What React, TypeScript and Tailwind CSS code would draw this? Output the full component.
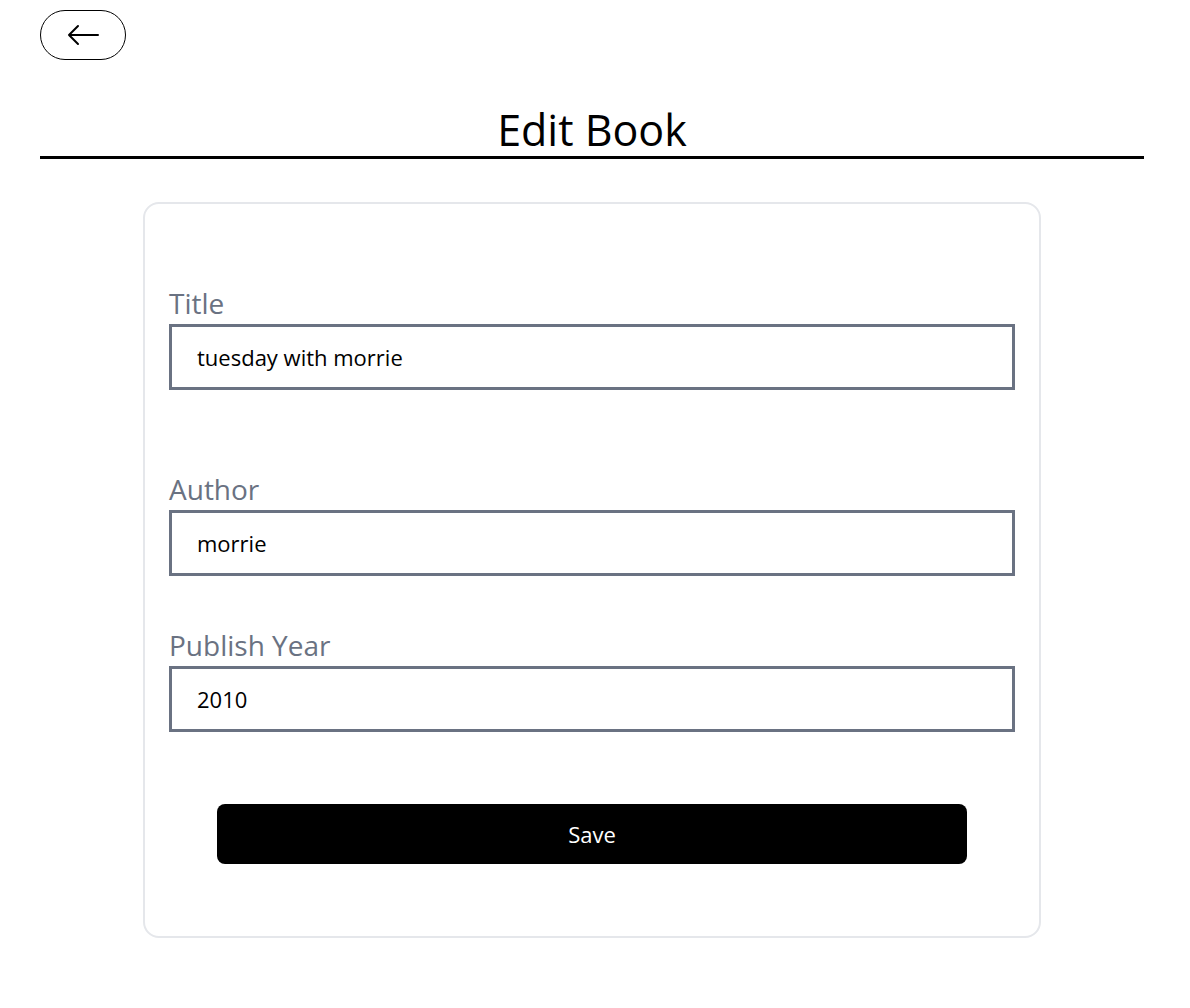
import React from "react";

const fields = [
  { label: "Title", value: "tuesday with morrie", gap: "mt-[84px]" },
  { label: "Author", value: "morrie", gap: "mt-[84px]" },
  { label: "Publish Year", value: "2010", gap: "mt-[54px]" },
];

export default function App() {
  return (
    <div
      className="min-h-screen bg-white pl-10 pr-[46px] pt-[10px] text-black"
      style={{ fontFamily: '"Open Sans", "Noto Sans", sans-serif' }}
    >
      {/* Back button */}
      <button className="flex h-[50px] w-[86px] items-center justify-center rounded-full border border-black">
        <svg width="34" height="24" viewBox="0 0 34 24" fill="none" stroke="black" strokeWidth="2" strokeLinecap="round" strokeLinejoin="round">
          <path d="M32 12H3M12 3L3 12l9 9" />
        </svg>
      </button>

      <h1 className="mt-[43px] border-b-[3px] border-black text-center text-[43px] leading-[53px]">
        Edit Book
      </h1>

      {/* Form card */}
      <div className="mx-auto mt-[43px] w-[898px] rounded-2xl border-2 border-[#e5e7eb] px-6 pb-[72px]">
        {fields.map((f) => (
          <div key={f.label} className={f.gap}>
            <label className="block h-[36px] text-[28px] leading-[30px] text-gray-500">
              {f.label}
            </label>
            <input
              readOnly
              value={f.value}
              className="block h-[66px] w-full border-[3px] border-gray-500 pl-[25px] text-[22px] text-black outline-none"
            />
          </div>
        ))}
        <button className="mx-auto mt-[72px] block h-[60px] w-[750px] rounded-lg bg-black text-[22px] text-white">
          Save
        </button>
      </div>
    </div>
  );
}
